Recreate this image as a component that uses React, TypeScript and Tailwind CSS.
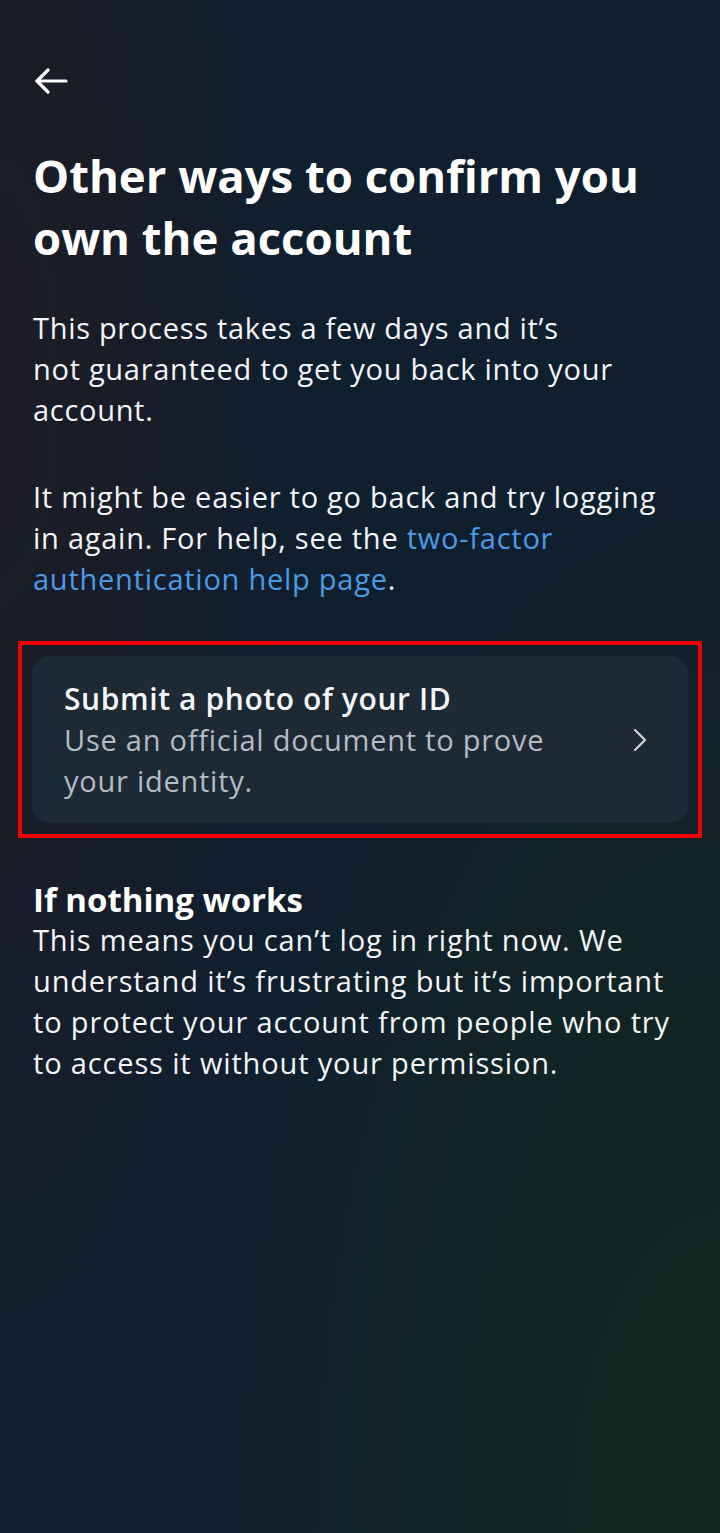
import React from "react";

const BackArrow = () => (
  <svg width="36" height="30" viewBox="0 0 36 30" fill="none" stroke="white" strokeWidth="3.2" strokeLinecap="round" strokeLinejoin="round">
    <path d="M33 15H4" />
    <path d="M15 4L4 15l11 11" />
  </svg>
);

const Chevron = () => (
  <svg width="16" height="26" viewBox="0 0 16 26" fill="none" stroke="#c9d0d6" strokeWidth="2.4" strokeLinecap="round" strokeLinejoin="round">
    <path d="M3 3l10 10L3 23" />
  </svg>
);

const App: React.FC = () => {
  return (
    <div className="w-[720px] min-h-[1533px] bg-[#101f2e] bg-[radial-gradient(ellipse_at_100%_100%,#122a20_0%,rgba(18,40,32,0.7)_22%,transparent_50%),radial-gradient(ellipse_40%_70%_at_0%_25%,#1c1c26_0%,rgba(28,28,38,0.7)_45%,transparent_100%)] text-white font-['Open_Sans',sans-serif]">
      <div className="px-[33px] pt-[66px]">
        <div className="h-[30px]">
          <BackArrow />
        </div>

        <h1 className="mt-[48px] text-[45.5px] leading-[62px] font-bold">
          Other ways to confirm you
          <br />
          own the account
        </h1>

        <p className="mt-[39px] text-[29px] leading-[41px] tracking-[0.7px] text-[#f2f4f6] whitespace-nowrap">
          This process takes a few days and it’s
          <br />
          not guaranteed to get you back into your
          <br />
          account.
        </p>

        <p className="mt-[46px] text-[29px] leading-[41px] tracking-[0.75px] text-[#f2f4f6] whitespace-nowrap">
          It might be easier to go back and try logging
          <br />
          in again. For help, see the <span className="text-[#4a9be6]">two-factor</span>
          <br />
          <span className="text-[#4a9be6]">authentication help page</span>.
        </p>
      </div>

      <div className="mt-[42px] mx-[18px] border-4 border-[#f20000] px-[10px] py-[11px]">
        <div className="flex items-center rounded-[18px] bg-[#1d2933] pl-[32px] pr-[40px] py-[22px]">
          <div className="flex-1 whitespace-nowrap">
            <div className="text-[30px] leading-[41px] font-semibold tracking-[0.6px] text-[#f4f6f8]">Submit a photo of your ID</div>
            <div className="text-[29px] leading-[41px] tracking-[0.75px] text-[#b3bcc4]">
              Use an official document to prove
              <br />
              your identity.
            </div>
          </div>
          <Chevron />
        </div>
      </div>

      <div className="px-[33px] mt-[43px] whitespace-nowrap">
        <h2 className="text-[33px] leading-[38px] font-bold">If nothing works</h2>
        <p className="text-[29px] leading-[41px] tracking-[0.85px] text-[#f2f4f6]">
          This means you can’t log in right now. We
          <br />
          understand it’s frustrating but it’s important
          <br />
          to protect your account from people who try
          <br />
          to access it without your permission.
        </p>
      </div>
    </div>
  );
};

export default App;
